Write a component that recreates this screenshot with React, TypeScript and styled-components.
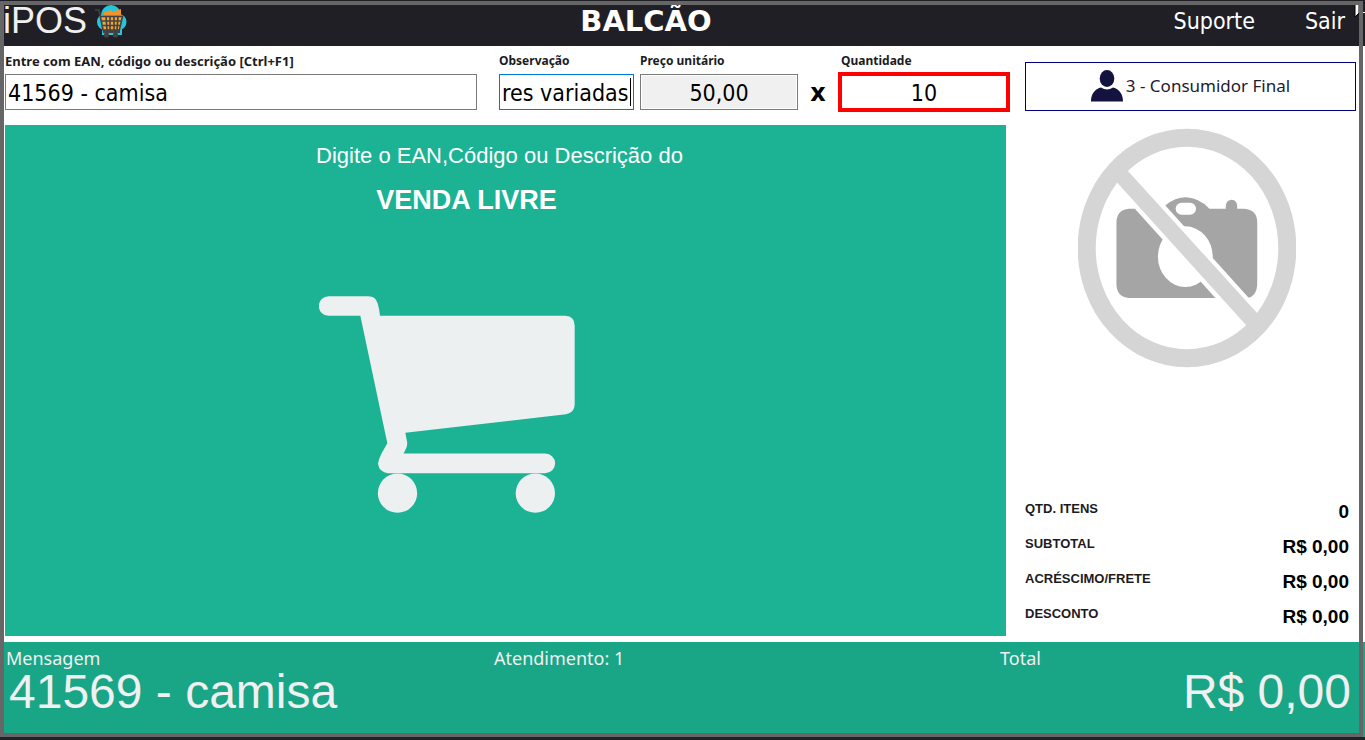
import React from 'react';
import styled, { createGlobalStyle } from 'styled-components';

const ui = `'Noto Sans', 'Open Sans', sans-serif`;
const tahoma = `'DejaVu Sans Condensed', 'Noto Sans', sans-serif`;
const arial = `'Liberation Sans', Arial, sans-serif`;

const GlobalStyle = createGlobalStyle`
  *, *::before, *::after { box-sizing: border-box; }
  body { margin: 0; background: #fff; font-family: ${ui}; color: #1c1b22; }
`;

const Page = styled.div`
  position: relative;
  display: flex;
  flex-direction: column;
  min-height: 100vh;
  border-bottom: 3px solid #222126;
  overflow: hidden;
`;

const WindowFrame = styled.div`
  position: absolute;
  inset: 1px 2px 0 0;
  border: 4px solid #666;
  pointer-events: none;
`;

const Header = styled.header`
  display: grid;
  grid-template-columns: 1fr auto 1fr;
  align-items: center;
  height: 46px;
  padding: 0 20px 4px 3px;
  background: #201f25;
  color: #fff;
`;

const Brand = styled.div`
  display: flex;
  align-items: center;
  gap: 8px;
  font: 36px/40px ${arial};
  color: #f0f0f0;
`;

const Title = styled.h1`
  margin: 0 56px 0 0;
  font: bold 29px/40px 'DejaVu Sans', sans-serif;
`;

const Nav = styled.nav`
  display: flex;
  justify-content: flex-end;
  gap: 50px;
`;

const NavLink = styled.a`
  color: #fff;
  text-decoration: none;
  font: 23px/38px ${tahoma};
`;

const Pointer = styled.svg`
  position: absolute;
  top: 4px;
  right: 0;
`;

const Main = styled.main`
  flex: 1;
  display: grid;
  grid-template-columns: minmax(0, 1fr) 331px;
  gap: 15px;
  padding: 0 9px 6px 5px;
`;

const Sale = styled.section`
  display: flex;
  flex-direction: column;
`;

const EntryForm = styled.form`
  display: flex;
  align-items: flex-start;
  height: 79px;
  padding-top: 6px;
`;

const Field = styled.div<{ $width?: number; $gap?: number }>`
  position: relative;
  display: flex;
  flex-direction: column;
  flex: ${(p) => (p.$width ? `0 0 ${p.$width}px` : '1 1 0')};
  min-width: 0;
  margin-right: ${(p) => p.$gap ?? 0}px;
`;

const Label = styled.label<{ $indent?: number; $large?: boolean }>`
  height: 22px;
  padding-left: ${(p) => p.$indent ?? 0}px;
  font: bold ${(p) => (p.$large ? 13 : 12)}px/18px ${ui};
  white-space: nowrap;
`;

const TextBox = styled.input<{ $active?: boolean; $center?: boolean }>`
  width: 100%;
  height: 36px;
  padding: 2px 2px 0;
  border: 1px solid ${(p) => (p.$active ? '#0078d7' : '#7a7a7a')};
  border-radius: 0;
  outline: none;
  background: #fff;
  color: #000;
  font: 23px/30px ${tahoma};
  text-align: ${(p) => (p.$center ? 'center' : 'left')};
  &:read-only { background: #f0f0f0; box-shadow: inset 0 0 0 1px #fff; }
`;

const QuantityBox = styled(TextBox)`
  height: 40px;
  margin-top: -2px;
  border: 4px solid #f00;
`;

const Caret = styled.span`
  position: absolute;
  right: 3px;
  bottom: 4px;
  width: 1px;
  height: 28px;
  background: #000;
`;

const Times = styled.span`
  flex: 0 0 40px;
  padding-top: 26px;
  text-align: center;
  font: bold 24px/30px 'DejaVu Sans', sans-serif;
  color: #000;
`;

const Panel = styled.div`
  flex: 1;
  display: flex;
  flex-direction: column;
  align-items: center;
  margin-right: 4px;
  padding: 16px 12px 0 0;
  background: #1bb394;
  color: #fff;
  font-family: ${arial};
`;

const Prompt = styled.p`
  margin: 0;
  font-size: 22px;
  line-height: 30px;
`;

const SaleMode = styled.h2`
  margin: 13px 66px 80px 0;
  font-size: 27px;
  line-height: 32px;
`;

const CartArt = styled.svg`
  margin-right: 106px;
  fill: #ecf0f1;
`;

const Side = styled.aside`
  display: flex;
  flex-direction: column;
  padding-top: 16px;
`;

const Customer = styled.button`
  display: flex;
  align-items: center;
  justify-content: center;
  gap: 3px;
  height: 49px;
  padding: 0 0 2px;
  border: 1px solid #000080;
  background: #fff;
  color: #1c1b30;
  font: 17px/24px ${ui};
`;

const NoPhoto = styled.svg`
  align-self: center;
  margin: 17px 7px 0 0;
`;

const Summary = styled.dl`
  display: grid;
  gap: 12px;
  margin: auto 7px 8px 0;
  font-family: ${arial};
  font-weight: bold;
`;

const SummaryRow = styled.div`
  display: flex;
  justify-content: space-between;
  height: 23px;
`;

const SummaryName = styled.dt`
  font-size: 13px;
  line-height: 18px;
`;

const SummaryValue = styled.dd`
  margin: 0;
  padding-top: 1px;
  font-size: 19px;
  line-height: 22px;
  color: #000;
`;

const Footer = styled.footer`
  display: grid;
  grid-template-columns: 488px 506px 1fr;
  height: 95px;
  padding: 4px 14px 0 6px;
  background: #19a687;
  color: #f0f0f0;
`;

const FooterLabel = styled.div`
  font: 18px/24px ${ui};
`;

const FooterValue = styled.output<{ $right?: boolean }>`
  display: block;
  padding-left: 3px;
  font: 48px/44px ${arial};
  text-align: ${(p) => (p.$right ? 'right' : 'left')};
  white-space: nowrap;
`;

const BasketLogo = () => (
  <svg width="32" height="34" viewBox="0 0 32 34" aria-hidden="true">
    <circle cx="16" cy="11" r="10" fill="#26c6da" />
    <circle cx="10" cy="18" r="8" fill="#26c6da" />
    <circle cx="23.500" cy="18" r="8" fill="#26c6da" />
    <path d="M7 20h20v11H7z" fill="#26c6da" />
    <path d="M9 11V8l8-2v2l9-3v6z" fill="#f0932b" />
    <path d="M6 13h21l-3 13H9z" fill="#f2a33a" />
    <path
      d="M0 6h4l4 20h17M5 12.500h22.500l-3 13M7 17h20M8 21.500h18M11 12l1 14M15 12v14M19 12v14M23 12l-1 14"
      fill="none"
      stroke="#424242"
      strokeWidth="1.600"
    />
    <path d="M8 26h17v3H8z" fill="#424242" />
    <circle cx="11.500" cy="31" r="2.600" fill="#424242" />
    <circle cx="20.500" cy="31" r="2.600" fill="#424242" />
  </svg>
);

const PersonIcon = () => (
  <svg width="32" height="32" viewBox="0 0 32 32" fill="#14123f" aria-hidden="true">
    <ellipse cx="16" cy="8.500" rx="7.300" ry="8.500" />
    <path d="M0 31.500C0 25 3 19 10 17.500c4 2.500 8 2.500 12 0C29 19 32 25 32 31.500Z" />
  </svg>
);

const totals = [
  ['QTD. ITENS', '0'],
  ['SUBTOTAL', 'R$ 0,00'],
  ['ACRÉSCIMO/FRETE', 'R$ 0,00'],
  ['DESCONTO', 'R$ 0,00'],
];

export default function App() {
  return (
    <Page>
      <GlobalStyle />
      <Header>
        <Brand>
          iPOS
          <BasketLogo />
        </Brand>
        <Title>BALCÃO</Title>
        <Nav>
          <NavLink href="#suporte">Suporte</NavLink>
          <NavLink href="#sair">Sair</NavLink>
        </Nav>
        <Pointer width="11" height="14" viewBox="0 0 11 14" aria-hidden="true">
          <path d="M1 0h4v9l-4 4z" fill="#fff" stroke="#000" strokeWidth="1" />
          <path d="M9 8h2v1H9z" fill="#fff" />
        </Pointer>
      </Header>
      <Main>
        <Sale>
          <EntryForm onSubmit={(e) => e.preventDefault()}>
            <Field $gap={22}>
              <Label htmlFor="product" $large>Entre com EAN, código ou descrição [Ctrl+F1]</Label>
              <TextBox id="product" defaultValue="41569 - camisa" />
            </Field>
            <Field $width={135} $gap={6}>
              <Label htmlFor="note">Observação</Label>
              <TextBox id="note" $active defaultValue="res variadas" />
              <Caret />
            </Field>
            <Field $width={158}>
              <Label htmlFor="price">Preço unitário</Label>
              <TextBox id="price" $center readOnly defaultValue="50,00" />
            </Field>
            <Times>x</Times>
            <Field $width={172}>
              <Label htmlFor="quantity" $indent={3}>Quantidade</Label>
              <QuantityBox id="quantity" $center defaultValue="10" />
            </Field>
          </EntryForm>
          <Panel>
            <Prompt>Digite o EAN,Código ou Descrição do</Prompt>
            <SaleMode>VENDA LIVRE</SaleMode>
            <CartArt width="256" height="217" viewBox="57 48 768 650" aria-hidden="true">
              <path d="M86 48H206Q227 48 233 70Q238 85 240 107H796Q824 109 824 136V374Q823 399 798 402L316 458L321 484Q323 492 319 503L311 520H736A29 29 0 0 1 736 579H264Q238 577 234 551Q236 536 245 519L262 489L181 107H86A29 29 0 0 1 86 48Z" />
              <circle cx="292.500" cy="639" r="59" />
              <circle cx="706" cy="639" r="59" />
            </CartArt>
          </Panel>
        </Sale>
        <Side>
          <Customer type="button">
            <PersonIcon />
            3 - Consumidor Final
          </Customer>
          <NoPhoto width="218" height="240" viewBox="55 25 652 720" preserveAspectRatio="none" role="img" aria-label="Sem foto">
            <path
              d="M207 267H232Q265 267 300 267L317 257Q345 233 378 233Q418 235 448 267H497V258Q499 240 515 240Q530 241 531 258V267H552Q590 270 591 306V496Q589 530 562 535H207Q172 532 170 496V306Q172 270 207 267Z"
              fill="#a5a5a5"
            />
            <rect x="347" y="249" width="61" height="36" rx="18" fill="#fff" />
            <ellipse cx="376" cy="411" rx="82" ry="91" fill="#fff" />
            <path d="M225 267L300 240L317 258L566 535L466 535Z" fill="#fff" />
            <path d="M155 170L190 138L606 597L573 633Z" fill="#d5d5d5" />
            <ellipse cx="381" cy="385" rx="300" ry="331" fill="none" stroke="#d5d5d5" strokeWidth="54" />
          </NoPhoto>
          <Summary>
            {totals.map(([name, value]) => (
              <SummaryRow key={name}>
                <SummaryName>{name}</SummaryName>
                <SummaryValue>{value}</SummaryValue>
              </SummaryRow>
            ))}
          </Summary>
        </Side>
      </Main>
      <Footer>
        <div>
          <FooterLabel>Mensagem</FooterLabel>
          <FooterValue>41569 - camisa</FooterValue>
        </div>
        <FooterLabel>Atendimento: 1</FooterLabel>
        <div>
          <FooterLabel>Total</FooterLabel>
          <FooterValue $right>R$ 0,00</FooterValue>
        </div>
      </Footer>
      <WindowFrame />
    </Page>
  );
}
